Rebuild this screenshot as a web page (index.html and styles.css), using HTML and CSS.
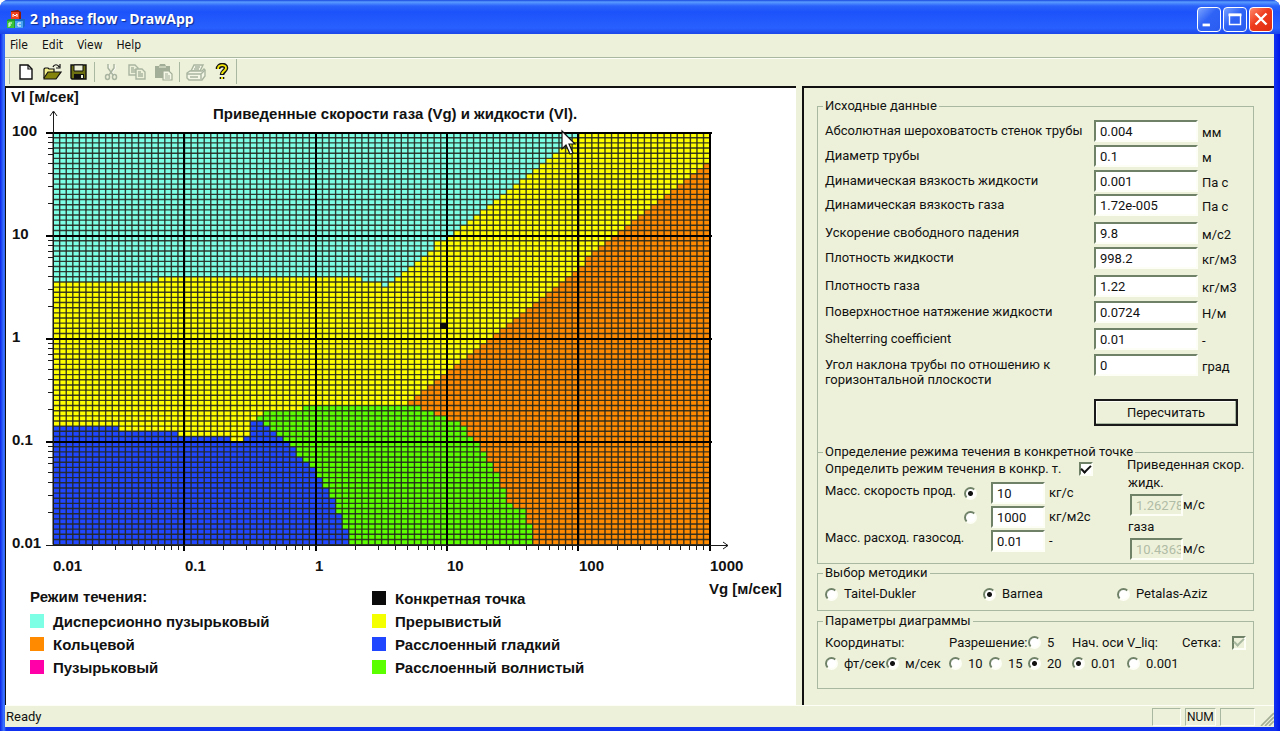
FILE: index.html
```html
<!DOCTYPE html>
<html lang="ru">
<head>
<meta charset="utf-8">
<title>2 phase flow - DrawApp</title>
<link rel="stylesheet" href="styles.css">
</head>
<body>
<div class="window">
  <header class="titlebar">
    <svg class="app-icon" viewBox="0 0 19 19" width="19" height="19" aria-hidden="true">
      <path d="M5 1l7-1 3 2v7H5z" fill="#8c1c08"/><path d="M5 2h8v7H5z" fill="#f0421c"/><path d="M7 7V4l2 2 2-2v3" fill="none" stroke="#fff" stroke-width="1"/>
      <path d="M1 10l2-1h6v9H1z" fill="#1f9a30"/><path d="M1 11h7v7H1z" fill="#38c43c"/><path d="M3 17v-4h3M3 15h2" fill="none" stroke="#fff"/>
      <path d="M9 10l2-1h8v7l-2 2H9z" fill="#1668c8"/><path d="M9 11h8v7H9z" fill="#4aa4f4"/><path d="M15 13h-3v3h3" fill="none" stroke="#fff"/>
    </svg>
    <h1 class="title">2 phase flow - DrawApp</h1>
    <div class="caption-buttons">
      <button class="caption" aria-label="Minimize"><svg viewBox="0 0 24 24" width="22" height="22"><path d="M5 17h8v3H5z" fill="#fff"/></svg></button>
      <button class="caption" aria-label="Maximize"><svg viewBox="0 0 24 24" width="22" height="22"><path d="M6 7h12v11H6z" fill="none" stroke="#fff" stroke-width="1.5"/><path d="M5 6h14v3H5z" fill="#fff"/></svg></button>
      <button class="caption close" aria-label="Close"><svg viewBox="0 0 24 24" width="22" height="22"><path d="M6 6l12 12M18 6L6 18" stroke="#fff" stroke-width="2.6"/></svg></button>
    </div>
  </header>

  <nav class="menubar">
    <button>File</button><button>Edit</button><button>View</button><button>Help</button>
  </nav>

  <div class="toolbar">
    <button aria-label="New"><svg viewBox="0 0 20 18" width="20" height="18"><path d="M4 2h8l4 4v10H4z" fill="#fff" stroke="#111" stroke-width="1.4"/><path d="M12 2v4h4" fill="none" stroke="#111" stroke-width="1.2"/></svg></button>
    <button aria-label="Open"><svg viewBox="0 0 20 18" width="20" height="18"><path d="M2 15V6l1-1h3l1 1h5v3" fill="#f4f08a" stroke="#111" stroke-width="1.2"/><path d="M2 15l4-6h13l-5 7H2z" fill="#84840c" stroke="#111" stroke-width="1.2"/><path d="M11 4c1-3 5-3 6 0M18 1v4h-4" fill="none" stroke="#111" stroke-width="1.2"/></svg></button>
    <button aria-label="Save"><svg viewBox="0 0 20 18" width="20" height="18"><path d="M3 2h15v14H4l-1-1z" fill="#6c7010" stroke="#111" stroke-width="1.4"/><path d="M6 2h9v6H6z" fill="#eef1da" stroke="#111"/><path d="M6 11h10v5H6z" fill="#111"/><path d="M13 12h2v3h-2z" fill="#eef1da"/></svg></button>
    <span class="sep"></span>
    <button aria-label="Cut" disabled><svg viewBox="0 0 20 18" width="20" height="18"><g fill="none" stroke="#fff" transform="translate(1 1)"><path d="M7 1v4l6 7M13 1v4l-6 7"/></g><g fill="none" stroke="#a9b5a0" stroke-width="1.5"><path d="M7 1v4l5 7M13 1v4l-5 7"/><ellipse cx="6.500" cy="14" rx="2" ry="2.500"/><ellipse cx="13.500" cy="14" rx="2" ry="2.500"/></g></svg></button>
    <button aria-label="Copy" disabled><svg viewBox="0 0 20 18" width="20" height="18"><g stroke="#a9b5a0" stroke-width="1.4" fill="#eef1da"><path d="M2 2h6l3 3v7H2zM4 5h3M4 7h5M4 9h5"/><path d="M9 6h6l3 3v7H9zM11 9h3M11 11h5M11 13h5"/></g></svg></button>
    <button aria-label="Paste" disabled><svg viewBox="0 0 20 18" width="20" height="18"><path d="M2 3h4l1-2h5l1 2h4v12H2z" fill="#a2ae98"/><path d="M6 4h7" stroke="#eef1da"/><path d="M10 8h6l3 3v6h-9z" fill="#f4f6e6" stroke="#a2ae98" stroke-width="1.2"/><path d="M12 11h3M12 13h5M12 15h5" stroke="#a2ae98"/></svg></button>
    <span class="sep"></span>
    <button aria-label="Print" disabled><svg viewBox="0 0 20 18" width="20" height="18"><g stroke="#a9b5a0" stroke-width="1.4" fill="#f4f6e6"><path d="M5 8l3-6h9l-3 6z"/><path d="M1 10l3-2h12l2-2 1 1v6l-3 4H3l-2-2z"/><path d="M1 11h14v5M15 11l4-4M4 14h8M9 4h5M8 6h5" fill="none"/></g></svg></button>
    <button aria-label="Help"><svg viewBox="0 0 20 18" width="20" height="18"><path d="M6 6c0-5 8-5 8-1 0 3-4 3-4 7M10 14v2" fill="none" stroke="#111" stroke-width="4.600"/><path d="M6 6c0-5 8-5 8-1 0 3-4 3-4 6M10 14v2" fill="none" stroke="#f2e60a" stroke-width="1.900"/></svg></button>
    <span class="sep end"></span>
  </div>

  <main class="panes">
    <section class="plot-pane">
      <svg class="chart" viewBox="6 88 790 496" role="img" aria-label="Карта режимов течения">
        <defs>
          <path id="ticks-x" d="M39.500 0v5M62.500 0v5M79.500 0v5M91.500 0v5M102.500 0v5M111.500 0v5M118.500 0v5M125.500 0v5"/>
          <path id="ticks-y" d="M0 5.500h5M0 10.500h5M0 16.500h5M0 22.500h5M0 31.500h5M0 41.500h5M0 54.500h5M0 71.500h5"/>
        </defs>
        <!-- Regimes: one unit is one cell, 20 cells per decade -->
        <g transform="translate(53 132.500) scale(6.570 5.150)" shape-rendering="crispEdges">
          <path fill="#ff8a00" d="M0 0H100V80H0z"/>
          <path fill="#ffff00" d="M0 0H100V6h-1v1h-1v1h-1v1h-1v1h-1v1h-1v1h-1v1h-1v1h-1v1h-1v1h-1v1h-1v1h-1v1h-1v1h-1v1h-1v1h-1v1h-1v1H81V26h-1v1h-1v1h-1v1h-1v1h-1v1h-1v1h-1v1h-1v1h-1v1h-1v1h-1v1h-1v1h-1v1h-1v1h-1v1h-1v1h-1v1h-1v1h-1v1h-1v1h-1v1h-1v1h-1v1h-1v1h-1v1h-1v1h-1v1V80H0z"/>
          <path fill="#7dffe6" d="M0 0H80V1h-1v1h-1v1h-1v1h-1v1h-1v1h-1v1h-1v1h-1v1h-1v1h-1v1h-1v1h-1v1h-1v1h-1v1h-1v1h-1v1h-1v1h-1v1h-1v1h-1v1H58V23H57V24H56V25H55V26H54V27H53V28H52V29H51V30H50V29H47V28H16V29H0z"/>
          <path fill="#5cff00" d="M31 80V55H32V54H38V53H56V54H58V55H60V56H62V57H63V59H64V60H65V62H66V64H67V66H68V69H69V72H70V73H72V76H73V80z"/>
          <path fill="#2046ff" d="M0 80V57H10V58H19V59H27V60H29V59H30V56H32V57H33V58H34V59H35V60H36V61H37V63H38V64H39V65H40V67H41V69H42V71H43V74H44V77H45V80z"/>
        </g>
        <!-- Fine grid -->
        <g stroke="#26281f" stroke-opacity=".9">
          <path d="M52.400 338.500H710" stroke-width="412" stroke-dasharray="1.400 5.170"/>
          <path d="M381.500 131.900V545" stroke-width="657" stroke-dasharray="1.400 3.750"/>
        </g>
        <rect x="440" y="323" width="7" height="6" fill="#0a0a0a"/>
        <g stroke="#000" stroke-width="2" fill="none">
          <path d="M46 133H712M46 236H712M46 339H712M46 442H712M184 132V551M316 132V551M447 132V551M578 132V551M710 132V551"/>
        </g>
        <g stroke="#1a1a1a" fill="none">
          <path d="M53.500 545V112M50 116l3.500-5 3.500 5M46 545.500H728M723 542l5 3.500-5 3.500"/>
          <use href="#ticks-x" x="53" y="545"/><use href="#ticks-x" x="184" y="545"/><use href="#ticks-x" x="316" y="545"/><use href="#ticks-x" x="447" y="545"/><use href="#ticks-x" x="578" y="545"/>
          <use href="#ticks-y" x="48" y="132"/><use href="#ticks-y" x="48" y="235"/><use href="#ticks-y" x="48" y="338"/><use href="#ticks-y" x="48" y="441"/>
        </g>
        <g class="chart-text">
          <text x="11" y="102">Vl [м/сек]</text>
          <text x="213" y="119">Приведенные скорости газа (Vg) и жидкости (Vl).</text>
          <text x="12" y="136">100</text><text x="12" y="239">10</text><text x="12" y="342">1</text><text x="12" y="445">0.1</text><text x="12" y="548">0.01</text>
          <text x="53" y="571">0.01</text><text x="185" y="571">0.1</text><text x="315" y="571">1</text><text x="447" y="571">10</text><text x="579" y="571">100</text><text x="710" y="571">1000</text>
          <text x="709" y="594">Vg [м/сек]</text>
        </g>
        <path d="M562 131v18l4-4 4 9 3-1-4-9h6z" fill="#fff" stroke="#111" stroke-width="1.200"/>
      </svg>
      <div class="legend">
        <span class="legend-title">Режим течения:</span>
        <span class="key"><i class="swatch point"></i>Конкретная точка</span>
        <span class="key"><i class="swatch dispersed"></i>Дисперсионно пузырьковый</span>
        <span class="key"><i class="swatch slug"></i>Прерывистый</span>
        <span class="key"><i class="swatch annular"></i>Кольцевой</span>
        <span class="key"><i class="swatch smooth"></i>Расслоенный гладкий</span>
        <span class="key"><i class="swatch bubble"></i>Пузырьковый</span>
        <span class="key"><i class="swatch wavy"></i>Расслоенный волнистый</span>
      </div>
    </section>

    <form class="form-pane">
      <fieldset class="group source">
        <legend>Исходные данные</legend>
        <div class="fields">
          <label for="rough">Абсолютная шероховатость стенок трубы</label><input class="edit" id="rough" value="0.004"><span>мм</span>
          <label for="diam">Диаметр трубы</label><input class="edit" id="diam" value="0.1"><span>м</span>
          <label for="mul">Динамическая вязкость жидкости</label><input class="edit" id="mul" value="0.001"><span>Па с</span>
          <label for="mug">Динамическая вязкость газа</label><input class="edit" id="mug" value="1.72e-005"><span>Па с</span>
          <label for="grav">Ускорение свободного падения</label><input class="edit" id="grav" value="9.8"><span>м/с2</span>
          <label for="rhol">Плотность жидкости</label><input class="edit" id="rhol" value="998.2"><span>кг/м3</span>
          <label for="rhog">Плотность газа</label><input class="edit" id="rhog" value="1.22"><span>кг/м3</span>
          <label for="sigma">Поверхностное натяжение жидкости</label><input class="edit" id="sigma" value="0.0724"><span>Н/м</span>
          <label for="shelt">Shelterring coefficient</label><input class="edit" id="shelt" value="0.01"><span>-</span>
          <label class="tall" for="angle">Угол наклона трубы по отношению к горизонтальной плоскости</label><input class="edit" id="angle" value="0"><span>град</span>
        </div>
        <button class="recalc" type="button">Пересчитать</button>
      </fieldset>

      <fieldset class="group point-group">
        <legend>Определение режима течения в конкретной точке</legend>
        <div class="point-cols">
          <div>
            <div class="enable"><label for="enable">Определить режим течения в конкр. т.</label><input type="checkbox" class="check" id="enable" checked></div>
            <div class="rates">
              <label for="rate1">Масс. скорость прод.</label><input type="radio" class="radio" name="rate" aria-label="кг/с" checked><input class="edit" id="rate1" value="10"><span>кг/с</span>
              <span></span><input type="radio" class="radio" name="rate" aria-label="кг/м2с"><input class="edit" aria-label="Масс. скорость, кг/м2с" value="1000"><span>кг/м2с</span>
              <label class="wide" for="rate3">Масс. расход. газосод.</label><input class="edit" id="rate3" value="0.01"><span>-</span>
            </div>
          </div>
          <div class="reduced">
            <span>Приведенная скор.</span>
            <label for="vliq">жидк.</label>
            <div class="result"><input class="edit" id="vliq" value="1.26278" disabled><span>м/с</span></div>
            <label for="vgas">газа</label>
            <div class="result"><input class="edit" id="vgas" value="10.4363" disabled><span>м/с</span></div>
          </div>
        </div>
      </fieldset>

      <fieldset class="group method">
        <legend>Выбор методики</legend>
        <div class="methods">
          <label class="opt"><input type="radio" class="radio" name="method">Taitel-Dukler</label>
          <label class="opt"><input type="radio" class="radio" name="method" checked>Barnea</label>
          <label class="opt"><input type="radio" class="radio" name="method">Petalas-Aziz</label>
        </div>
      </fieldset>

      <fieldset class="group params">
        <legend>Параметры диаграммы</legend>
        <div class="param-grid">
          <span class="two">Координаты:</span>
          <span class="two">Разрешение:</span>
          <label class="opt"><input type="radio" class="radio" name="res">5</label>
          <span class="two">Нач. оси V_liq:</span>
          <label class="grid-opt">Сетка:<input type="checkbox" class="check" checked disabled></label>
          <label class="opt"><input type="radio" class="radio" name="unit">фт/сек</label>
          <label class="opt"><input type="radio" class="radio" name="unit" checked>м/сек</label>
          <label class="opt"><input type="radio" class="radio" name="res">10</label>
          <label class="opt"><input type="radio" class="radio" name="res">15</label>
          <label class="opt"><input type="radio" class="radio" name="res" checked>20</label>
          <label class="opt"><input type="radio" class="radio" name="origin" checked>0.01</label>
          <label class="opt"><input type="radio" class="radio" name="origin">0.001</label>
        </div>
      </fieldset>
    </form>
  </main>

  <footer class="statusbar">
    <span class="ready">Ready</span>
    <span class="cell"></span><span class="cell num">NUM</span><span class="cell last"></span>
    <svg class="grip" viewBox="0 0 14 14" width="14" height="14" aria-hidden="true"><path d="M1 14L14 1M5 14l9-9M9 14l5-5" stroke="#a3ad94" stroke-width="1.600"/></svg>
  </footer>
</div>
</body>
</html>
```

FILE: styles.css
```css
:root {
  --face: #eef1da;
  --shadow: #a9b8a0;
  --dark: #6f8268;
  --light: #fdfef6;
}
* { box-sizing: border-box; }
body {
  margin: 0;
  font: 13px/16px Roboto, "DejaVu Sans Condensed", sans-serif;
  color: #111;
  background: #fff;
}
button, input { font: inherit; color: inherit; }
button { padding: 0; border: 0; background: none; }

.window {
  display: flex;
  flex-direction: column;
  min-height: 100vh;
  padding: 0 6px 5px 5px;
  background: linear-gradient(90deg, #0a22e8, #3f7aff 4px, #1030f0 6px, #1030f0 calc(100% - 5px), #0018e8);
  border-radius: 8px 8px 0 0;
}

.titlebar {
  display: flex;
  align-items: center;
  gap: 5px;
  height: 34px;
  margin: 0 -6px 0 -5px;
  padding: 4px 7px 0 6px;
  border-radius: 8px 8px 0 0;
  background: linear-gradient(#1848e0, #5a9cff 2px, #2a62fa 6px, #1c52fa 12px, #2860ff 28px, #1c46e8);
}
.title {
  flex: 1;
  margin: 0;
  font: bold 14px/18px "Open Sans", sans-serif;
  color: #fff;
  text-shadow: 1px 1px 1px #0a2a90;
}
.caption-buttons { display: flex; gap: 2px; }
.caption {
  display: grid;
  place-items: center;
  width: 24px;
  height: 25px;
  border: 1px solid #fff;
  border-radius: 4px;
  background: linear-gradient(135deg, #7ca4ff, #2f63f6 45%, #2a5cf0);
}
.close { background: linear-gradient(135deg, #ff8a6c, #ee3a1c 45%, #e02c10); }

.menubar {
  display: flex;
  gap: 14px;
  height: 24px;
  padding: 0 5px 2px;
  background: var(--face);
  border-bottom: 1px solid var(--shadow);
}
.menubar button { font: 12px/20px "DejaVu Sans Condensed", "DejaVu Sans", sans-serif; }

.toolbar {
  display: flex;
  align-items: center;
  height: 28px;
  padding: 0 0 2px 4px;
  background: var(--face);
  border-top: 1px solid var(--light);
}
.toolbar::before {
  content: "";
  width: 3px;
  height: 25px;
  border-left: 1px solid var(--shadow);
}
.toolbar button { display: grid; place-items: center; width: 26px; height: 26px; }
.sep { width: 1px; height: 20px; margin: 0 3px; background: var(--shadow); }
.sep.end { height: 25px; margin: 0 1px; }

.panes {
  flex: 1;
  display: grid;
  grid-template-columns: minmax(0, 1fr) 472px;
  gap: 6px;
  background: var(--face);
}
.plot-pane {
  border: solid #111;
  border-width: 2px 0 0 1px;
  background: #fff;
}
.chart { display: block; width: 100%; overflow: visible; }
.chart-text, .legend { font: bold 15px/23px "Liberation Sans", Arial, sans-serif; fill: #111; }
.legend {
  display: grid;
  grid-template-columns: 342px 1fr;
  grid-auto-rows: 23px;
  padding: 3px 0 24px 24px;
}
.legend-title { line-height: 20px; }
.key { display: flex; align-items: center; gap: 9px; }
.swatch { width: 14px; height: 14px; margin-bottom: 2px; }
.point { background: #0a0a0a; }
.dispersed { background: #7dffe6; }
.slug { background: #f4ff00; }
.annular { background: #ff8a00; }
.smooth { background: #2046ff; }
.bubble { background: #ff00a8; }
.wavy { background: #5cff00; }

.form-pane {
  padding: 10px 20px 16px 13px;
  border: solid #111;
  border-width: 2px 0 0 2px;
}
.group {
  min-width: 0;
  margin: 0;
  padding: 0 7px;
  border: 1px solid var(--shadow);
}
legend { padding: 0 2px; margin-left: -2px; height: 16px; white-space: nowrap; }
.source { height: 354px; margin-bottom: -8px; border-bottom: 0; }
.fields {
  display: grid;
  grid-template-columns: 269px 104px 1fr;
  grid-template-rows: 25px 25px 24px 28px 25px 28px 26px 27px 26px 22px;
  padding-top: 6px;
  white-space: nowrap;
}
.fields label, .fields span { line-height: 22px; }
.fields span { padding: 2px 0 0 4px; }
.fields .tall { width: 240px; padding-top: 3px; line-height: 15px; white-space: normal; }
.edit {
  width: 100%;
  min-width: 0;
  height: 22px;
  padding: 0 4px;
  border: 2px solid;
  border-color: var(--dark) var(--light) var(--light) var(--dark);
  border-radius: 0;
  background: #fff;
}
.edit:disabled { color: #b0bca6; background: var(--face); }
.recalc {
  display: block;
  width: 144px;
  height: 27px;
  margin: 23px 0 0 269px;
  border: 2px solid #1a1a1a;
  box-shadow: inset -1px -1px 0 var(--shadow), inset 1px 1px 0 var(--light);
}

.point-group { height: 120px; margin-bottom: 1px; }
.point-cols { display: grid; grid-template-columns: 302px 1fr; white-space: nowrap; }
.enable { display: flex; justify-content: space-between; align-items: center; height: 18px; padding-right: 34px; }
.rates {
  display: grid;
  grid-template-columns: 139px 27px 54px 1fr;
  grid-auto-rows: 24px;
  padding-top: 4px;
}
.rates label { line-height: 18px; }
.rates .wide { grid-column: span 2; line-height: 16px; }
.rates .radio { margin-top: 5px; }
.rates span { padding-left: 4px; line-height: 22px; }
.reduced { display: flex; flex-direction: column; margin-top: -4px; }
.reduced > span, .reduced > label { line-height: 18px; }
.reduced > label { padding-left: 1px; }
.result { display: flex; height: 24px; padding: 2px 0 0 3px; align-items: center; margin-bottom: 2px; }
.result .edit { width: 53px; padding-right: 0; }

.radio, .check { appearance: none; flex: none; margin: 0; background: #fff; }
.radio {
  width: 13px;
  height: 13px;
  border: 2px solid;
  border-color: var(--dark) var(--light) var(--light) var(--dark);
  border-radius: 50%;
}
.radio:checked { background: radial-gradient(circle, #111 2px, #fff 3px); }
.check {
  display: grid;
  place-items: center;
  width: 14px;
  height: 14px;
  border: 2px solid;
  border-color: var(--dark) var(--light) var(--light) var(--dark);
}
.check:checked::after {
  content: "";
  width: 8px;
  height: 4px;
  margin-top: -3px;
  border: solid #111;
  border-width: 0 0 2px 2px;
  transform: rotate(-45deg);
}
.check:disabled { background: var(--face); }
.check:disabled::after { border-color: var(--shadow); }
.opt { display: flex; align-items: center; gap: 6px; white-space: nowrap; }

.method { height: 46px; margin-bottom: 2px; }
.methods { display: grid; grid-template-columns: 158px 134px 1fr; padding-top: 5px; }
.params { height: 76px; }
.param-grid {
  display: grid;
  grid-template-columns: 61px 63px 40px 39px 44px 55px 55px 1fr;
  grid-auto-rows: 21px;
  align-items: center;
  padding-top: 3px;
  white-space: nowrap;
}
.two { grid-column: span 2; }
.grid-opt { display: flex; align-items: center; justify-content: space-between; }

.statusbar {
  display: flex;
  align-items: center;
  gap: 4px;
  height: 22px;
  padding: 2px 0 1px;
  background: var(--face);
  border-top: 1px solid var(--light);
}
.ready { flex: 1; padding-left: 1px; }
.cell { width: 29px; height: 18px; border: 1px solid; border-color: var(--shadow) var(--light) var(--light) var(--shadow); }
.num { width: 31px; padding-left: 1px; font-size: 12px; }
.last { width: 35px; }
.grip { margin-left: 1px; align-self: flex-end; }
```
